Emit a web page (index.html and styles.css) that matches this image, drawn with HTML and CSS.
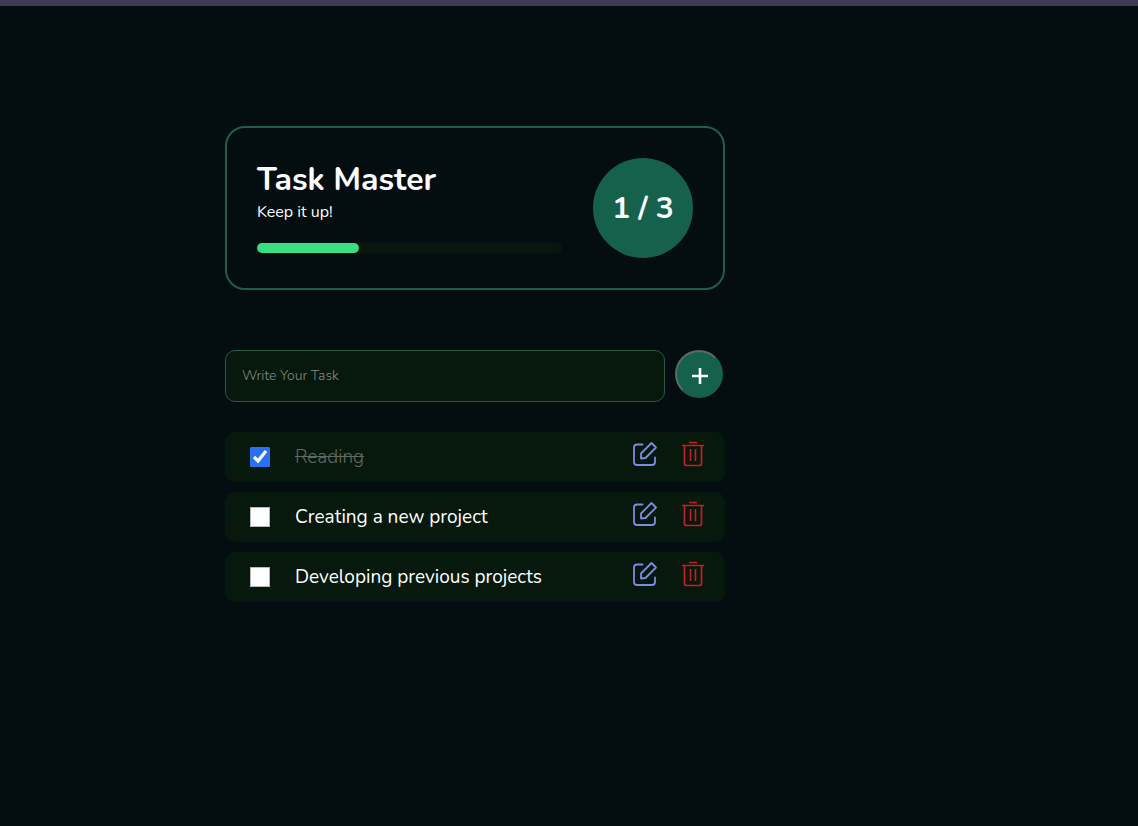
FILE: index.html
```
<!DOCTYPE html>
<html lang="en">
<head>
<meta charset="utf-8">
<meta name="viewport" content="width=device-width, initial-scale=1">
<title>Task Master</title>
<link rel="stylesheet" href="styles.css">
</head>
<body>
<svg class="sprite" aria-hidden="true">
  <symbol id="edit" viewBox="0 0 26 26">
    <path d="M10.500 3.500H5Q2 3.500 2 6.500V21Q2 24 5 24H20Q23 24 23 21V16.500M9 12.500L19.500 2L24 6.500L13.500 17L9 17.500Z" fill="none" stroke="currentColor" stroke-width="1.800" stroke-linejoin="round" stroke-linecap="round"/>
  </symbol>
  <symbol id="trash" viewBox="0 0 26 26">
    <path d="M9 1.500H17M2 4.500H24M4.500 4.500V22.500Q4.500 24.500 6.500 24.500H19.500Q21.500 24.500 21.500 22.500V4.500" fill="none" stroke="currentColor" stroke-width="1.700"/>
    <path d="M10.500 8V20M15.500 8V20" fill="none" stroke="currentColor" stroke-width="1.600"/>
  </symbol>
</svg>
<div class="page">
  <main class="app">
    <section class="stats">
      <div class="details">
        <h1 class="title">Task Master</h1>
        <p class="message">Keep it up!</p>
        <div class="track" role="progressbar" aria-label="Completed tasks" aria-valuemin="0" aria-valuemax="3" aria-valuenow="1"><div class="bar" style="width:33.333%"></div></div>
      </div>
      <div class="count">1 / 3</div>
    </section>
    <form class="entry">
      <input class="field" type="text" placeholder="Write Your Task" aria-label="Write Your Task">
      <button class="add" type="button" aria-label="Add task"><svg viewBox="0 0 16 16" width="16" height="16"><path d="M8 0V16M0 8H16" stroke="currentColor" stroke-width="2.600"/></svg></button>
    </form>
    <ul class="tasks">
      <li class="task">
        <input class="check" type="checkbox" id="t1" checked>
        <label class="name" for="t1">Reading</label>
        <button class="icon edit" type="button" aria-label="Edit Reading"><svg width="26" height="26"><use href="#edit"/></svg></button>
        <button class="icon trash" type="button" aria-label="Delete Reading"><svg width="26" height="26"><use href="#trash"/></svg></button>
      </li>
      <li class="task">
        <input class="check" type="checkbox" id="t2">
        <label class="name" for="t2">Creating a new project</label>
        <button class="icon edit" type="button" aria-label="Edit Creating a new project"><svg width="26" height="26"><use href="#edit"/></svg></button>
        <button class="icon trash" type="button" aria-label="Delete Creating a new project"><svg width="26" height="26"><use href="#trash"/></svg></button>
      </li>
      <li class="task">
        <input class="check" type="checkbox" id="t3">
        <label class="name" for="t3">Developing previous projects</label>
        <button class="icon edit" type="button" aria-label="Edit Developing previous projects"><svg width="26" height="26"><use href="#edit"/></svg></button>
        <button class="icon trash" type="button" aria-label="Delete Developing previous projects"><svg width="26" height="26"><use href="#trash"/></svg></button>
      </li>
    </ul>
  </main>
</div>
</body>
</html>
```
FILE: styles.css
```
* { box-sizing: border-box; margin: 0; padding: 0; }
body {
  min-height: 100vh;
  background: #040d0f;
  color: #fff;
  border-top: 6px solid #3b3c54;
  font-family: Nunito, Lato, "Open Sans", sans-serif;
}
.sprite { display: none; }
.page { max-width: 950px; padding: 120px 16px 40px; }
.app { max-width: 500px; margin: 0 auto; }
.stats {
  display: flex;
  align-items: center;
  gap: 31px;
  padding: 30px;
  border: 2px solid #1f5d4c;
  border-radius: 20px;
}
.details { flex: 1; padding-bottom: 4px; }
.title { font-size: 32px; line-height: 42px; font-weight: 700; }
.message { font-size: 16px; line-height: 22px; }
.track { height: 10px; margin-top: 20px; background: #07170b; border-radius: 5px; }
.bar { height: 100%; background: #36dd83; border-radius: 5px; }
.count {
  display: grid;
  place-items: center;
  width: 100px;
  height: 100px;
  border-radius: 50%;
  background: #15614c;
  font-size: 30px;
  font-weight: 700;
}
.entry { display: flex; gap: 10px; margin-top: 60px; }
.field {
  flex: 1;
  min-width: 0;
  height: 52px;
  padding: 0 16px 2px;
  border: 1px solid #285a40;
  border-radius: 10px;
  background: #07190d;
  color: #fff;
  font: 300 14px Nunito, Lato, "Open Sans", sans-serif;
}
.field::placeholder { color: #858b86; }
.add {
  display: grid;
  place-items: center;
  width: 48px;
  height: 48px;
  margin-right: 2px;
  padding: 4px 0 0 2px;
  border: 2px solid;
  border-color: #5e6865 #15614c #15614c #5e6865;
  border-radius: 50%;
  background: #15614c;
  color: #fff;
}
.tasks { display: grid; gap: 10px; margin-top: 30px; list-style: none; }
.task {
  display: flex;
  align-items: center;
  height: 50px;
  padding: 0 19px 0 25px;
  border-radius: 10px;
  background: #07190d;
}
.check { appearance: none; width: 20px; height: 20px; border: 1px solid #b5bab6; background: #fff; }
.check:checked { appearance: auto; accent-color: #2871f5; }
.name { flex: 1; margin-left: 25px; font-size: 19px; line-height: 28px; }
.check:checked + .name { color: #626a64; font-weight: 300; text-decoration: line-through 1px; }
.icon { height: 26px; margin-bottom: 6px; border: 0; background: none; }
.icon svg { display: block; }
.edit { color: #7d8be0; }
.trash { margin-left: 22px; color: #c51f25; }
```
